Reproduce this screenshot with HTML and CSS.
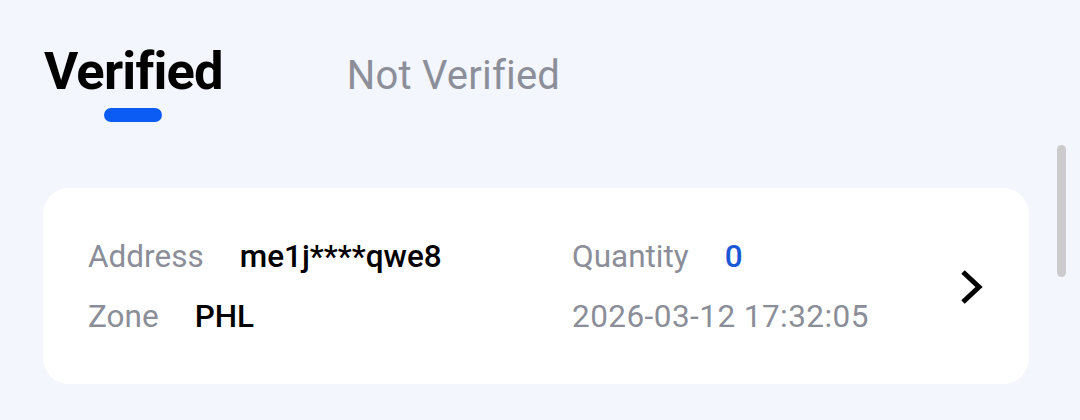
FILE: index.html
```html
<!DOCTYPE html>
<html lang="en">
<head>
<meta charset="utf-8">
<title>Verified</title>
<link rel="stylesheet" href="styles.css">
</head>
<body>
<div class="page">
  <nav class="tabs">
    <div class="tab tab-active">
      <span class="tab-label">Verified</span>
      <span class="tab-bar"></span>
    </div>
    <div class="tab">
      <span class="tab-label">Not Verified</span>
    </div>
  </nav>

  <div class="card">
    <div class="card-grid">
      <div class="field"><span class="label">Address</span><span class="value">me1j****qwe8</span></div>
      <div class="field"><span class="label">Quantity</span><span class="value value-blue">0</span></div>
      <div class="field"><span class="label">Zone</span><span class="value">PHL</span></div>
      <div class="field"><span class="label date">2026-03-12 17:32:05</span></div>
    </div>
    <svg class="chevron" width="24" height="38" viewBox="0 0 24 38" aria-hidden="true">
      <path d="M4 4 L20 19 L4 34" fill="none" stroke="#000" stroke-width="5" stroke-linecap="butt" stroke-linejoin="miter"/>
    </svg>
  </div>
  <div class="scroll-thumb"></div>
</div>
</body>
</html>
```

FILE: styles.css
```css
html, body {
  margin: 0;
  padding: 0;
}
body {
  background: #f3f6fd;
  font-family: Roboto, "Noto Sans", "Liberation Sans", sans-serif;
  width: 1080px;
  height: 420px;
  overflow: hidden;
}
.page {
  position: relative;
  height: 420px;
  padding: 41px 51px 0 43px;
  box-sizing: border-box;
}
.tabs {
  display: flex;
  align-items: baseline;
  gap: 124px;
  padding-left: 1px;
}
.tab {
  display: inline-flex;
  flex-direction: column;
  align-items: center;
}
.tab-label {
  font-size: 40px;
  line-height: 60px;
  color: #8c8f99;
  font-weight: 400;
  letter-spacing: 0.2px;
}
.tab-active .tab-label {
  font-size: 52.5px;
  font-weight: 700;
  color: #000;
  letter-spacing: -0.8px;
}
.tab-bar {
  display: block;
  width: 58px;
  height: 14px;
  border-radius: 7px;
  background: #0b5cf5;
  margin-top: 7px;
}
.card {
  margin-top: 66px;
  background: #fff;
  border-radius: 26px;
  height: 196px;
  box-sizing: border-box;
  padding: 49px 45px 47px 45px;
  display: flex;
  align-items: center;
}
.card-grid {
  flex: 1;
  display: grid;
  grid-template-columns: 484px 1fr;
  row-gap: 20px;
}
.field {
  display: flex;
  align-items: baseline;
  font-size: 31.5px;
  line-height: 40px;
}
.label {
  color: #8b8e98;
  margin-right: 36px;
}
.label.date {
  margin-right: 0;
  letter-spacing: 0.45px;
}
.value {
  color: #000;
  font-weight: 500;
}
.value-blue {
  color: #1a5ad8;
}
.chevron {
  display: block;
  margin-right: 1px;
}
.scroll-thumb {
  position: absolute;
  left: 1057px;
  top: 145px;
  width: 9px;
  height: 132px;
  border-radius: 5px;
  background: #cbcbcd;
}
```
